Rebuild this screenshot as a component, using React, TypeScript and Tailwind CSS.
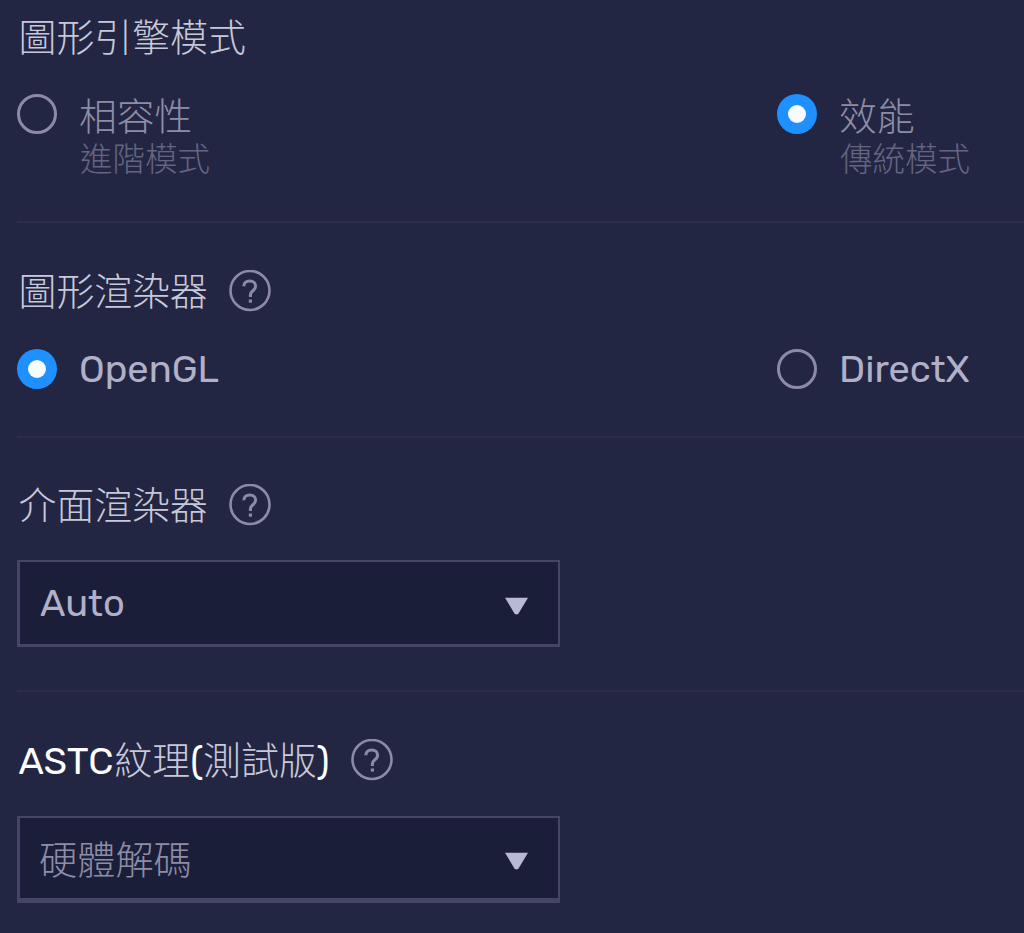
import type { ReactNode } from 'react';

function Radio({ checked }: { checked?: boolean }) {
  return checked ? (
    <span className="flex size-10 shrink-0 items-center justify-center rounded-full bg-[#1e90ff]">
      <span className="size-[18px] rounded-full bg-[#f7faff]" />
    </span>
  ) : (
    <span className="size-10 shrink-0 rounded-full border-[3px] border-[#8c8aa6]" />
  );
}

function Option({ label, note, checked }: { label: string; note?: string; checked?: boolean }) {
  return (
    <div className="flex w-[760px] shrink-0">
      <Radio checked={checked} />
      <div className="ml-[22px]">
        <div className={note ? 'pt-[3px] text-[37.8px] leading-10 text-[#8d8ea6]' : 'text-[38px] font-normal leading-10 text-[#b0b1c8]'}>{label}</div>
        {note && <div className="ml-px pt-[3px] text-[32.5px] leading-10 text-[#646580]">{note}</div>}
      </div>
    </div>
  );
}

function Help() {
  return (
    <svg className="size-[42px] shrink-0" viewBox="0 0 42 42" fill="none" stroke="#8c8aa6">
      <circle cx="21" cy="20.5" r="19.5" strokeWidth="2.6" />
      <path d="M14.8 16.2c0-3.2 2.3-5.2 5.9-5.2s5.9 2 5.9 5c0 2.4-1 3.5-2.7 4.8-1.9 1.4-2.5 2.3-2.5 4.2v2" strokeWidth="3.1" />
      <path d="M21.4 29.5v3.2" strokeWidth="3.2" />
    </svg>
  );
}

function Heading({ children, help }: { children: ReactNode; help?: boolean }) {
  return (
    <div className="flex h-[42px] items-center gap-[21px] whitespace-nowrap pl-[1.5px] text-[37.9px] leading-[42px] text-[#c8c9d8]">
      <h2 className="pt-[2px]">{children}</h2>
      {help && <Help />}
    </div>
  );
}

function Select({ value, cjk }: { value: string; cjk?: boolean }) {
  return (
    <div
      className={
        cjk
          ? 'flex h-[87px] w-[543px] items-center justify-between border-2 border-b-[5px] border-l-[3px] border-[#454667] bg-[#1b1e38] pl-[19px] pr-[30px]'
          : 'flex h-[87px] w-[543px] items-center justify-between border-2 border-b-[3px] border-l-[3px] border-[#454667] bg-[#1b1e38] pl-5 pr-[30px]'
      }
    >
      <span className={cjk ? 'pt-[5px] text-[38.2px] leading-10 text-[#8d8ea6]' : 'text-[38px] font-normal leading-10 text-[#b0b1c8]'}>{value}</span>
      <svg className="mt-[5px] h-[18px] w-[23px]" viewBox="0 0 24 18">
        <path d="M0 0.5h24L14 17q-2 1.5-4 0Z" fill="#b8b9d2" />
      </svg>
    </div>
  );
}

export default function App() {
  return (
    <main className="h-[933px] w-[1024px] overflow-hidden bg-[#232643] pl-[17px] font-['Rubik','Roboto','Noto_Sans_CJK_TC',sans-serif] font-light">
      <section className="h-[223px] border-b-2 border-[#2b2d4b] pt-4">
        <Heading>圖形引擎模式</Heading>
        <div className="mt-9 flex">
          <Option label="相容性" note="進階模式" />
          <Option label="效能" note="傳統模式" checked />
        </div>
      </section>
      <section className="h-[215px] border-b-2 border-[#2b2d4b] pt-[47px]">
        <Heading help>圖形渲染器</Heading>
        <div className="mt-[37px] flex">
          <Option label="OpenGL" checked />
          <Option label="DirectX" />
        </div>
      </section>
      <section className="h-[254px] border-b-2 border-[#2b2d4b] pt-[46px]">
        <Heading help>介面渲染器</Heading>
        <div className="mt-[34px]">
          <Select value="Auto" />
        </div>
      </section>
      <section className="pt-[47px]">
        <Heading help>
          <span className="mr-px font-normal text-white">ASTC</span>紋理<span className="font-normal text-white">(</span>測試版<span className="font-normal text-white">)</span>
        </Heading>
        <div className="mt-[35px]">
          <Select value="硬體解碼" cjk />
        </div>
      </section>
    </main>
  );
}
